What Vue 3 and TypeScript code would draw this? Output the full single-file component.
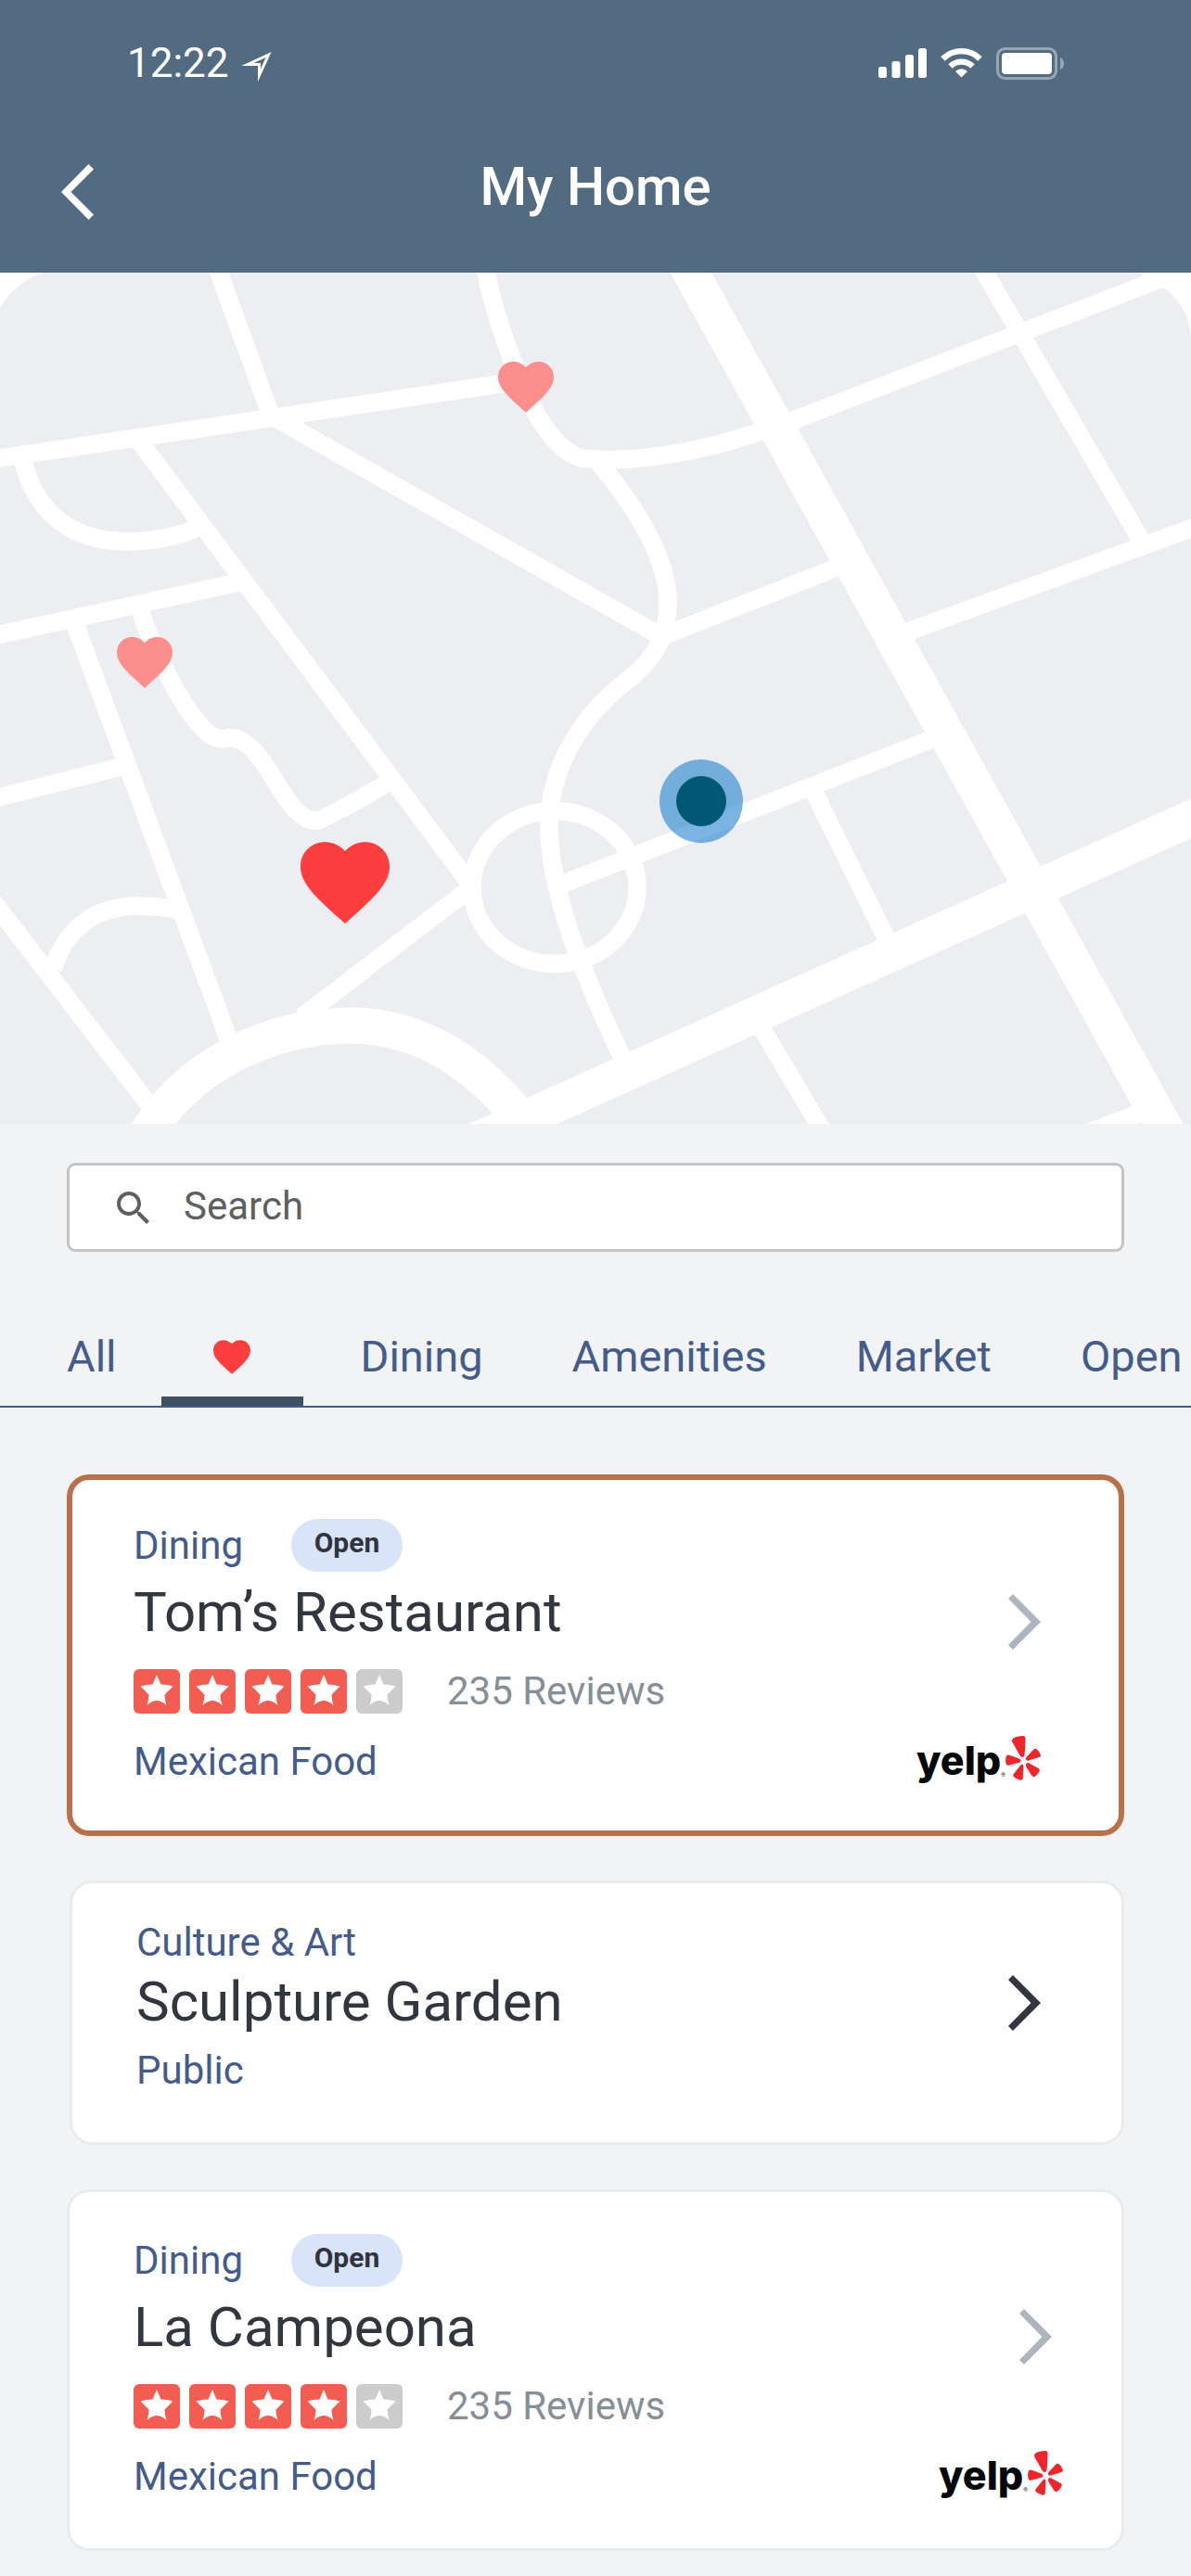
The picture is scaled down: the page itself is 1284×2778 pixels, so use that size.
<script setup lang="ts">
import { ref } from 'vue'

interface Place {
  category: string
  name: string
  detail: string
  open?: boolean
  rating?: number
  reviews?: number
  layout: 'featured' | 'compact' | 'listed'
}

const query = ref('')
const activeTab = ref('favorites')

const tabs: { id: string; label: string }[] = [
  { id: 'all', label: 'All' },
  { id: 'favorites', label: '' },
  { id: 'dining', label: 'Dining' },
  { id: 'amenities', label: 'Amenities' },
  { id: 'market', label: 'Market' },
  { id: 'open', label: 'Open' },
]

const places: Place[] = [
  { category: 'Dining', name: 'Tom’s Restaurant', detail: 'Mexican Food', open: true, rating: 4, reviews: 235, layout: 'featured' },
  { category: 'Culture & Art', name: 'Sculpture Garden', detail: 'Public', layout: 'compact' },
  { category: 'Dining', name: 'La Campeona', detail: 'Mexican Food', open: true, rating: 4, reviews: 235, layout: 'listed' },
]

const heart =
  'M10 18.35l-1.45-1.32C3.4 12.36 0 9.28 0 5.5 0 2.42 2.42 0 5.5 0c1.74 0 3.41.81 4.5 2.09C11.09.81 12.76 0 14.5 0 17.58 0 20 2.42 20 5.5c0 3.78-3.4 6.86-8.55 11.54z'

const streets = [
  'M231 280L296 459',
  'M-10 495.500L567 410',
  'M300 452.500L716 688',
  'M146 470L506 952',
  'M25 497C36 545 70 584 137 584C165 584 190 579 214 569',
  'M-10 686.500L262 627',
  'M78 665L250 1130',
  'M150 652C157 680 168 702 178 722S197 758 206 770S226 797 240 797C244 797 244 795.500 248 795.500C266 795.500 280 815 296 841C312 868 325 885 340 885C343 885 344 885 347 883C370 872 395 858 425 840',
  'M-10 862L138 825',
  'M-10 969L165 1197',
  'M57 1045C72 998 105 977 150 977C165 977 175 978 192 981',
  'M506 959L325 1097',
  'M521 280C530 330 545 370 556 398C572 440 600 495 636 495L655 496C710 495 765 484 818 466L856 453L1270 293.500',
  'M644 497C690 552 720 605 720 650C720 700 690 724 671 738C625 775 592 830 592 890C592 960 625 1045 680 1160',
  'M712 687L910 609',
  'M1056 284L1235 591',
  'M970 684.500L1300 564',
  'M602 955L1010 795',
  'M875 849L960 1021',
  'M816 1100L893 1230',
  'M1150 1230.500L1235 1198',
]

const avenues = [
  'M737 280L1265 1233',
  'M480 1245L1300 875.500',
  'M155 1228C200 1150 290 1106 378 1106C455 1106 530 1150 592 1250',
]
</script>

<template>
  <div class="screen">
    <header class="header">
      <div class="status">
        <div class="status-group">
          <span>12:22</span>
          <svg class="locate" width="30" height="32" viewBox="0 0 30 32" aria-hidden="true">
            <path d="M27.500 3L5 13.500H17.500V25Z" />
          </svg>
        </div>
        <div class="status-group">
          <svg width="52" height="32" viewBox="0 0 52 32" fill="#fff" aria-hidden="true">
            <rect x="0" y="20" width="9" height="12" rx="2.500" />
            <rect x="14.500" y="14" width="9" height="18" rx="2.500" />
            <rect x="29" y="7" width="9" height="25" rx="2.500" />
            <rect x="43" y="0" width="9" height="32" rx="2.500" />
          </svg>
          <svg width="45" height="32" viewBox="0 0 45 32" aria-hidden="true">
            <g fill="none" stroke="#fff" stroke-width="6.300">
              <path d="M2.500 11.500A28.300 28.300 0 0 1 42.500 11.500" />
              <path d="M10.500 19.500A17 17 0 0 1 34.500 19.500" />
            </g>
            <path d="M22.500 31.500L16 25A9.200 9.200 0 0 1 29 25Z" fill="#fff" />
          </svg>
          <svg width="73" height="35" viewBox="0 0 73 35" aria-hidden="true">
            <rect x="1.500" y="1.500" width="63" height="32" rx="8" fill="none" stroke="#fff" stroke-opacity=".4" stroke-width="3" />
            <rect x="6" y="6" width="54" height="23" rx="4" fill="#fff" />
            <path d="M69 11C71.500 12 73 14.500 73 17.500S71.500 23 69 24Z" fill="#fff" fill-opacity=".4" />
          </svg>
        </div>
      </div>
      <nav class="nav">
        <button class="plain back" type="button" aria-label="Back">
          <svg width="35" height="60" viewBox="0 0 35 60" aria-hidden="true">
            <path d="M29.500 0L35 5.500L10.500 30L35 54.500L29.500 60L0 30Z" fill="#fff" />
          </svg>
        </button>
        <h1>My Home</h1>
      </nav>
    </header>

    <svg class="map" viewBox="0 294 1284 918" role="img" aria-label="Neighborhood map">
      <rect x="0" y="294" width="1284" height="918" fill="#edeef2" />
      <g fill="#fff">
        <path d="M0 294H46Q16 305 0 332Z" />
        <path d="M1225 294C1260 308 1284 330 1284 368V294Z" />
      </g>
      <g fill="none" stroke="#fff">
        <g stroke-width="19.500">
          <path v-for="d in streets" :key="d" :d="d" />
          <ellipse cx="598" cy="957" rx="89" ry="82.500" />
        </g>
        <g stroke-width="39">
          <path v-for="d in avenues" :key="d" :d="d" />
        </g>
      </g>
      <path :d="heart" transform="translate(537 390) scale(3)" fill="#fc8e8e" />
      <path :d="heart" transform="translate(126 687) scale(3)" fill="#fc8e8e" />
      <path :d="heart" transform="translate(324 908) scale(4.800)" fill="#fc3e3f" />
      <circle cx="756" cy="864" r="45" fill="#137acc" fill-opacity=".56" />
      <circle cx="756" cy="864" r="27" fill="#005876" />
    </svg>

    <main>
      <label class="search">
        <svg width="35" height="35" viewBox="3 3 17.490 17.490" aria-hidden="true">
          <path
            fill="#5f5f5f"
            d="M15.500 14h-.79l-.28-.27C15.410 12.590 16 11.110 16 9.500 16 5.910 13.090 3 9.500 3S3 5.910 3 9.500 5.910 16 9.500 16c1.610 0 3.090-.59 4.230-1.570l.27.28v.79l5 4.990L20.490 19l-4.990-5zm-6 0C7.010 14 5 11.990 5 9.500S7.010 5 9.500 5 14 7.010 14 9.500 11.990 14 9.500 14z"
          />
        </svg>
        <input v-model="query" type="search" placeholder="Search" aria-label="Search" />
      </label>

      <div class="tabs" role="tablist">
        <button
          v-for="tab in tabs"
          :key="tab.id"
          type="button"
          role="tab"
          class="plain tab"
          :class="['tab-' + tab.id, { active: activeTab === tab.id }]"
          :aria-selected="activeTab === tab.id"
          :aria-label="tab.label || 'Favorites'"
          @click="activeTab = tab.id"
        >
          <template v-if="tab.label">{{ tab.label }}</template>
          <svg v-else width="40" height="37" viewBox="0 0 20 18.350" aria-hidden="true">
            <path :d="heart" fill="#fc3e3f" />
          </svg>
        </button>
      </div>

      <section class="places">
        <article v-for="place in places" :key="place.name" class="card" :class="place.layout">
          <div class="info">
            <div class="kind">
              <span>{{ place.category }}</span>
              <span v-if="place.open" class="pill">Open</span>
            </div>
            <h2>{{ place.name }}</h2>
            <div v-if="place.rating" class="rating">
              <div class="stars" role="img" :aria-label="place.rating + ' out of 5'">
                <svg v-for="n in 5" :key="n" width="50" height="48" viewBox="0 0 50 48">
                  <rect width="50" height="48" rx="6" :fill="n <= place.rating ? '#f35c50' : '#ccc'" />
                  <path
                    fill="#fff"
                    d="M25 6L29.500 16.500Q36 16.500 42.500 18.500L33.500 27.500Q33.500 33 35.500 39Q30 34 25 34T14.500 39Q16.500 33 16.500 27.500L7.500 18.500Q14 16.500 20.500 16.500Z"
                  />
                </svg>
              </div>
              <span class="reviews">{{ place.reviews }} Reviews</span>
            </div>
            <p class="detail">{{ place.detail }}</p>
          </div>
          <div class="side">
            <button class="plain more" type="button" :aria-label="'View ' + place.name">
              <svg width="35" height="60" viewBox="0 0 35 60" aria-hidden="true">
                <path d="M5 0L35 30L5 60L0 55L24.500 30L0 5Z" fill="currentColor" />
              </svg>
            </button>
            <a v-if="place.reviews" class="yelp" href="#" @click.prevent>
              <span class="yelp-name">yelp</span>
              <span class="yelp-mark">®</span>
              <svg width="38" height="48" viewBox="0 0 38 48" fill="#ee252a" aria-hidden="true">
                <path d="M7 6Q6.500 4 8.500 2.500Q12 0 19 0Q21.500 0 21.500 3Q21.500 12 20.500 20.500Q20 23 18 23Q16.700 23 15.500 21Z" />
                <path d="M22.500 26Q21 25 22.500 23L30.500 14.500Q32 13 34 14.500Q37 17 38 21Q38 22.500 36.500 23L25 26.600Q23.500 27 22.500 26Z" />
                <path d="M22 31Q22.500 28.500 25 29.300L35.500 35Q37.500 36.200 36.700 38Q34.500 42 31.500 44Q29.500 44.500 28.500 43L22.700 34Q21.800 32.500 22 31Z" />
                <path d="M19.500 33L18.800 45.500Q18.500 48 16 47.700Q12 47 8.700 44Q7.500 42.500 8.800 41L16 32Q17.300 30.300 18.600 30.800Q19.500 31.500 19.500 33Z" />
                <path d="M14.500 24.500Q16.500 25.300 16.500 27Q16.500 28.300 15 28.700L3.500 31.700Q1.500 32.200 .8 30.500Q-.5 26 .8 22Q1.500 20 3.500 20.500Z" />
              </svg>
            </a>
          </div>
        </article>
      </section>
    </main>
  </div>
</template>

<style>
body {
  background: #f1f3f5;
}
</style>

<style scoped>
.screen {
  font-family: Roboto, 'Liberation Sans', sans-serif;
  font-size: 42px;
  line-height: 48px;
  color: #455c8a;
  background: #f1f3f5;
  padding-bottom: 27px;
  overflow: hidden;
}

.screen svg {
  display: block;
  flex: none;
}

.plain {
  font: inherit;
  color: inherit;
  background: none;
  border: 0;
  padding: 0;
  cursor: pointer;
}

h1,
h2,
p {
  margin: 0;
}

.header {
  background: #536b80;
  color: #fff;
  padding-bottom: 28px;
}

.status {
  display: flex;
  justify-content: space-between;
  align-items: center;
  height: 136px;
  padding: 0 137px 0 137px;
  font-size: 44px;
}

.status-group {
  display: flex;
  align-items: center;
  gap: 15px;
}

.locate {
  margin-top: 8px;
  overflow: visible;
}

.locate path {
  fill: none;
  stroke: #fff;
  stroke-width: 3px;
  stroke-miterlimit: 10;
}

.nav {
  display: grid;
  grid-template-columns: 1fr auto 1fr;
  align-items: center;
  height: 130px;
  padding: 0 66px;
}

.back {
  justify-self: start;
  padding-top: 12px;
}

h1 {
  font-size: 58px;
  font-weight: 500;
  line-height: 64px;
}

.map {
  width: 100%;
  height: auto;
}

.search {
  box-sizing: border-box;
  display: flex;
  align-items: center;
  gap: 37px;
  height: 96px;
  margin: 42px 72px 60px;
  padding: 0 51px;
  background: #fff;
  border: 3px solid #c3c4c5;
  border-radius: 9px;
}

.search input {
  flex: 1;
  min-width: 0;
  padding: 0 0 3px;
  border: 0;
  outline: 0;
  background: none;
  font: inherit;
  color: #5f5f5f;
  appearance: none;
}

.search input::placeholder {
  color: #5f5f5f;
  opacity: 1;
}

.tabs {
  display: flex;
  gap: 48px;
  padding-left: 72px;
  border-bottom: 2px solid #455c8a;
  overflow: hidden;
}

.tab {
  flex: none;
  height: 106px;
  padding: 0 34px 0 14px;
  font-size: 47px;
}

.tab-all {
  padding: 0;
}

.tab-favorites {
  display: flex;
  align-items: center;
  justify-content: center;
  width: 153px;
  padding: 0;
}

.tab.active {
  box-shadow: inset 0 -10px #3f5161;
}

.places {
  display: flex;
  flex-direction: column;
  gap: 48px;
  padding: 72px 72px 0;
}

.card {
  display: flex;
  justify-content: space-between;
  padding: 48px 90px 56px 72px;
  background: #fff;
  border-radius: 24px;
  box-shadow: inset 0 0 0 3px #e8ebee;
}

.featured {
  box-shadow: inset 0 0 0 6px #b8714a;
}

.compact {
  margin-left: 3px;
  padding-top: 43px;
}

.listed {
  padding-right: 66px;
}

.kind {
  display: flex;
  align-items: center;
  gap: 52px;
}

.pill {
  box-sizing: border-box;
  width: 120px;
  height: 57px;
  border-radius: 29px;
  background: #d9e4f8;
  color: #2f343d;
  font-size: 30px;
  font-weight: 700;
  line-height: 52px;
  text-align: center;
}

h2 {
  margin-top: 12px;
  font-size: 60px;
  font-weight: 400;
  line-height: 64px;
  color: #31363f;
}

.rating {
  display: flex;
  align-items: center;
  gap: 48px;
  margin-top: 29px;
}

.stars {
  display: flex;
  gap: 10px;
}

.reviews {
  color: #868f96;
}

.detail {
  margin-top: 28px;
}

.compact h2 {
  margin-top: 8px;
}

.compact .detail {
  margin-top: 18px;
}

.side {
  display: flex;
  flex-direction: column;
  align-items: flex-end;
  gap: 93px;
  padding-top: 81px;
}

.more {
  color: #adb6be;
}

.compact .side {
  padding-top: 59px;
}

.compact .more {
  color: #31363f;
}

.listed .more {
  margin-right: 12px;
}

.yelp {
  display: flex;
  align-items: flex-start;
  color: #050808;
  text-decoration: none;
}

.yelp-name {
  font-family: Inter, sans-serif;
  font-size: 43px;
  font-weight: 800;
  line-height: 52px;
}

.yelp-mark {
  align-self: flex-end;
  font-size: 6px;
  line-height: 20px;
}
</style>
